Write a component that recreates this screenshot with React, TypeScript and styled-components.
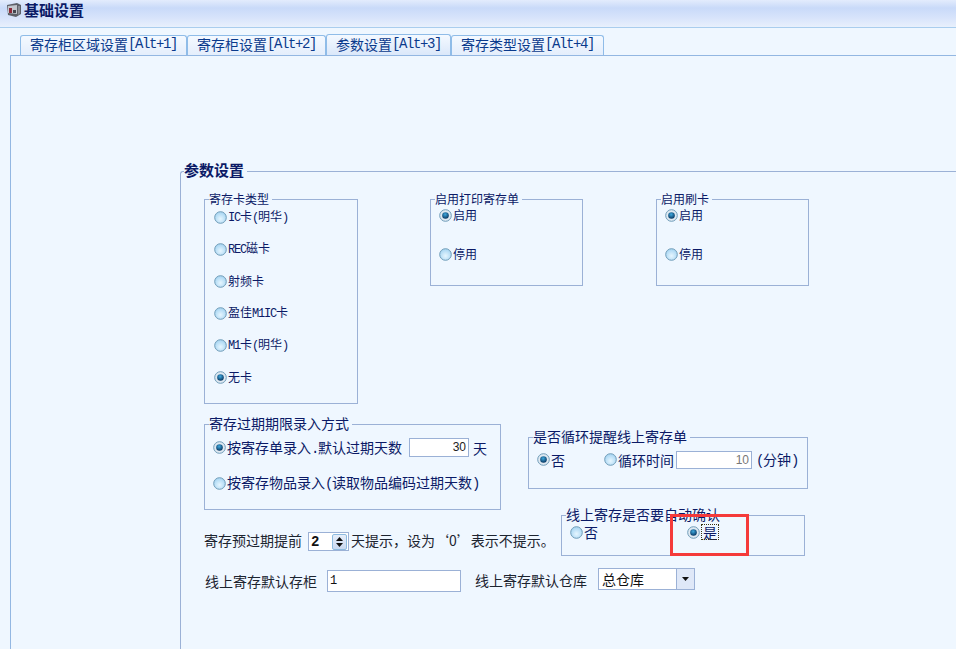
import React from "react";
import styled, { createGlobalStyle } from "styled-components";

const GlobalStyle = createGlobalStyle`
  html, body {
    margin: 0;
    padding: 0;
    height: 649px;
    overflow: hidden;
    background: #eff7ff;
  }
`;

const CJK = `"Noto Sans CJK SC", "Liberation Sans", sans-serif`;

function Radio({ on }: { on?: boolean }) {
  return (
    <RadioDot viewBox="0 0 13 13" width="13" height="13">
      <defs>
        <radialGradient id="off" cx="50%" cy="62%" r="60%">
          <stop offset="0" stopColor="#e6f6ff" />
          <stop offset="1" stopColor="#a5d4f2" />
        </radialGradient>
        <radialGradient id="dot" cx="45%" cy="35%" r="65%">
          <stop offset="0" stopColor="#3fa9de" />
          <stop offset="1" stopColor="#06345f" />
        </radialGradient>
      </defs>
      <circle cx="6.5" cy="6.5" r="5.8" fill={on ? "#dfe9f2" : "url(#off)"} stroke="#6f9cb8" />
      {on && <circle cx="6.5" cy="6.5" r="3.3" fill="url(#dot)" />}
    </RadioDot>
  );
}

function Opt({ label, on, big }: { label: React.ReactNode; on?: boolean; big?: boolean }) {
  return (
    <Option>
      <Radio on={on} />
      <OptText $big={big}>{label}</OptText>
    </Option>
  );
}

export default function App() {
  const cards = [
    <><Half>IC</Half>卡<Half>(</Half>明华<Half>)</Half></>,
    <><Half>REC</Half>磁卡</>,
    <>射频卡</>,
    <>盈佳<Half>M1IC</Half>卡</>,
    <><Half>M1</Half>卡<Half>(</Half>明华<Half>)</Half></>,
    <>无卡</>,
  ];
  return (
    <>
      <GlobalStyle />
      <Page>
        <TitleBar>
          <TitleIcon width="14" height="14" viewBox="0 0 14 14">
            <path d="M0 2l10-2 4 2v9l-5 3-8-2z" fill="#5d6068" />
            <path d="M1 3l9-1v9l-9-1z" fill="#c3c6cd" />
            <path d="M2 5h3v5H2z" fill="#8d2a3a" />
            <path d="M6 7h3v3H6z" fill="#43464f" />
            <path d="M11 3l2 0v7l-2 2z" fill="#8a8d95" />
          </TitleIcon>
          <Title>基础设置</Title>
        </TitleBar>
        <TabRow>
          <Tab>寄存柜区域设置<Half>[Alt+1]</Half></Tab>
          <Tab>寄存柜设置<Half>[Alt+2]</Half></Tab>
          <Tab $active>参数设置<Half>[Alt+3]</Half></Tab>
          <Tab>寄存类型设置<Half>[Alt+4]</Half></Tab>
        </TabRow>
        <Panel>
          <MainGroup>
            <MainLegend>参数设置</MainLegend>
            <TopRow>
              <CardGroup>
                <Legend>寄存卡类型</Legend>
                <CardList>
                  {cards.map((c, i) => (
                    <Opt key={i} label={c} on={i === 5} />
                  ))}
                </CardList>
              </CardGroup>
              <SwitchGroup>
                <Legend>启用打印寄存单</Legend>
                <SwitchList>
                  <Opt label="启用" on />
                  <Opt label="停用" />
                </SwitchList>
              </SwitchGroup>
              <SwitchGroup>
                <Legend>启用刷卡</Legend>
                <SwitchList>
                  <Opt label="启用" on />
                  <Opt label="停用" />
                </SwitchList>
              </SwitchGroup>
            </TopRow>
            <MiddleRow>
              <LeftCol>
                <ExpiryGroup>
                  <BigLegend>寄存过期期限录入方式</BigLegend>
                  <ExpiryLine>
                    <Opt big on label={<>按寄存单录入<Half>.</Half>默认过期天数</>} />
                    <DaysInput>30</DaysInput>
                    <Plain $navy>天</Plain>
                  </ExpiryLine>
                  <Opt big label={<>按寄存物品录入<Half>(</Half>读取物品编码过期天数<Half>)</Half></>} />
                </ExpiryGroup>
                <NoticeLine>
                  <Plain>寄存预过期提前</Plain>
                  <Stepper>
                    <StepValue>2</StepValue>
                    <StepButtons>
                      <svg width="13" height="14" viewBox="0 0 13 14">
                        <path d="M6.5 2l3.5 4H3z M6.5 12L3 8h7z" fill="#111" />
                      </svg>
                    </StepButtons>
                  </Stepper>
                  <Plain>天提示，设为‘0’表示不提示。</Plain>
                </NoticeLine>
              </LeftCol>
              <RightCol>
                <LoopGroup>
                  <BigLegend>是否循环提醒线上寄存单</BigLegend>
                  <LoopLine>
                    <Opt big on label="否" />
                    <Opt big label="循环时间" />
                    <MinutesInput>10</MinutesInput>
                    <Plain $navy><Half>(</Half>分钟<Half>)</Half></Plain>
                  </LoopLine>
                </LoopGroup>
                <ConfirmGroup>
                  <BigLegend>线上寄存是否要自动确认</BigLegend>
                  <ConfirmLine>
                    <Opt big label="否" />
                    <Opt big on label={<Focused>是</Focused>} />
                  </ConfirmLine>
                  <RedMark />
                </ConfirmGroup>
              </RightCol>
            </MiddleRow>
            <BottomRow>
              <Plain>线上寄存默认存柜</Plain>
              <CabinetInput>1</CabinetInput>
              <Plain>线上寄存默认仓库</Plain>
              <Select>
                <SelectValue>总仓库</SelectValue>
                <SelectArrow>
                  <svg width="7" height="4" viewBox="0 0 7 4">
                    <path d="M0 0h7L3.5 4z" fill="#111" />
                  </svg>
                </SelectArrow>
              </Select>
            </BottomRow>
          </MainGroup>
        </Panel>
      </Page>
    </>
  );
}

const Page = styled.div`
  width: 956px;
  height: 649px;
  overflow: hidden;
  background: #eff7ff;
  font-family: ${CJK};
`;
const Half = styled.span`
  font-family: "Liberation Mono", monospace;
  letter-spacing: -0.1em;
`;
const TitleBar = styled.div`
  height: 28px;
  display: flex;
  align-items: flex-start;
  gap: 3px;
  padding-left: 7px;
  box-sizing: border-box;
  border-bottom: 1px solid #a9cdee;
  background: linear-gradient(#e3ecfd 0, #c9daf9 8px, #d8e4fb 18px, #e8f0fc 27px);
`;
const TitleIcon = styled.svg`
  margin-top: 3px;
  flex: none;
`;
const Title = styled.div`
  font-size: 15px;
  font-weight: 700;
  line-height: 20px;
  color: #0b1a66;
`;
const TabRow = styled.div`
  display: flex;
  height: 21px;
  margin-top: 6px;
  padding-left: 20px;
  align-items: flex-end;
`;
const Tab = styled.div<{ $active?: boolean }>`
  height: ${(p) => (p.$active ? "21px" : "20px")};
  box-sizing: border-box;
  display: flex;
  align-items: center;
  padding: 0 9px 3px;
  font-size: 14px;
  color: #0a3a8c;
  white-space: nowrap;
  border: 1px solid #8fbce8;
  border-bottom: none;
  border-radius: 3px 3px 0 0;
  background: linear-gradient(#f4f9ff, ${(p) => (p.$active ? "#dbe8fa" : "#e4eefc")});
`;
const Panel = styled.div`
  margin-left: 10px;
  height: 594px;
  box-sizing: border-box;
  border-top: 1px solid #93b7e2;
  border-left: 1px solid #93b7e2;
  padding: 115px 0 0 169px;
`;
const MainGroup = styled.div`
  position: relative;
  height: 480px;
  border-top: 1px solid #9bb1d6;
  border-left: 1px solid #9bb1d6;
  border-top-left-radius: 3px;
  padding: 27px 0 0 23px;
`;
const MainLegend = styled.div`
  position: absolute;
  top: -12px;
  left: 3px;
  padding: 0 3px 0 0;
  background: #eff7ff;
  font-size: 15px;
  font-weight: 700;
  line-height: 20px;
  color: #0b1a66;
`;
const TopRow = styled.div`
  display: flex;
  align-items: flex-start;
  gap: 72px;
  & > :last-child {
    margin-left: 1px;
  }
`;
const Group = styled.div`
  position: relative;
  box-sizing: border-box;
  border: 1px solid #9bb1d6;
`;
const Legend = styled.div`
  position: absolute;
  top: -9px;
  left: 4px;
  padding: 0 3px 0 0;
  background: #eff7ff;
  font-size: 12px;
  line-height: 16px;
  color: #0b1a66;
  white-space: nowrap;
`;
const BigLegend = styled(Legend)`
  top: -10px;
  font-size: 14px;
  line-height: 16px;
`;
const CardGroup = styled(Group)`
  width: 154px;
  height: 205px;
  padding: 9px 0 0 9px;
`;
const CardList = styled.div`
  display: flex;
  flex-direction: column;
  gap: 16px;
`;
const SwitchGroup = styled(Group)`
  width: 153px;
  height: 87px;
  padding: 7px 0 0 8px;
`;
const SwitchList = styled.div`
  display: flex;
  flex-direction: column;
  gap: 23px;
`;
const Option = styled.div`
  display: flex;
  align-items: center;
  gap: 1px;
  height: 16px;
  white-space: nowrap;
`;
const RadioDot = styled.svg`
  flex: none;
`;
const OptText = styled.span<{ $big?: boolean }>`
  font-size: ${(p) => (p.$big ? "14px" : "12px")};
  line-height: 16px;
  color: #0b1a66;
`;
const MiddleRow = styled.div`
  display: flex;
  margin-top: 20px;
`;
const LeftCol = styled.div`
  width: 324px;
  flex: none;
  display: flex;
  flex-direction: column;
`;
const ExpiryGroup = styled(Group)`
  width: 297px;
  height: 86px;
  padding: 13px 0 0 8px;
  display: flex;
  flex-direction: column;
  gap: 18px;
`;
const ExpiryLine = styled.div`
  display: flex;
  align-items: center;
  height: 19px;
`;
const inputBox = `
  box-sizing: border-box;
  border: 1px solid #9bb1d6;
  background: #fff;
  font-family: "Liberation Sans", sans-serif;
  font-size: 12px;
`;
const DaysInput = styled.div`
  ${inputBox}
  width: 60px;
  height: 19px;
  line-height: 17px;
  margin-left: 7px;
  padding-right: 2px;
  text-align: right;
  color: #222;
`;
const Plain = styled.span<{ $navy?: boolean }>`
  font-size: 14px;
  line-height: 18px;
  color: ${(p) => (p.$navy ? "#0b1a66" : "#1c2430")};
  white-space: nowrap;
  margin-left: 4px;
`;
const NoticeLine = styled.div`
  display: flex;
  align-items: center;
  margin-top: 22px;
  height: 19px;
  & > span:first-child {
    margin: -3px 0 0;
  }
  & > span:last-child {
    margin: -3px 0 0 2px;
  }
`;
const Stepper = styled.div`
  flex: none;
  width: 41px;
  height: 19px;
  margin-left: 6px;
  box-sizing: border-box;
  display: flex;
  align-items: center;
  justify-content: space-between;
  border: 1px solid #9bb1d6;
  background: #fff;
`;
const StepValue = styled.span`
  font-family: "Liberation Mono", monospace;
  font-size: 14px;
  font-weight: 700;
  line-height: 16px;
  padding-left: 2px;
  color: #111;
`;
const StepButtons = styled.span`
  display: flex;
  width: 15px;
  height: 16px;
  margin-right: 1px;
  border: 1px solid #8dbbdf;
  border-radius: 2px;
  background: linear-gradient(#e6eefa, #c9d9f0);
  box-sizing: border-box;
`;
const RightCol = styled.div`
  display: flex;
  flex-direction: column;
  width: 280px;
  flex: none;
  padding-top: 13px;
`;
const LoopGroup = styled(Group)`
  width: 280px;
  height: 52px;
  padding: 12px 0 0 8px;
`;
const LoopLine = styled.div`
  display: flex;
  align-items: center;
  height: 19px;
  & > div:nth-child(2) {
    margin-left: 39px;
  }
`;
const MinutesInput = styled.div`
  ${inputBox}
  width: 76px;
  height: 18px;
  line-height: 16px;
  margin-left: 2px;
  padding-right: 2px;
  text-align: right;
  color: #777;
`;
const ConfirmGroup = styled(Group)`
  width: 244px;
  height: 41px;
  margin: 26px 0 0 33px;
  padding: 8px 0 0 8px;
`;
const ConfirmLine = styled.div`
  display: flex;
  gap: 89px;
`;
const Focused = styled.span`
  outline: 1px dotted #3a3410;
  outline-offset: -1px;
  display: inline-block;
  height: 16px;
  padding: 0 2px;
`;
const RedMark = styled.div`
  position: absolute;
  left: 108px;
  top: -2px;
  width: 79px;
  height: 42px;
  box-sizing: border-box;
  border: 3px solid #f53a3a;
`;
const BottomRow = styled.div`
  display: flex;
  align-items: flex-start;
  margin-top: 14px;
  & > span {
    margin: 2px 0 0 1px;
  }
  & > span:nth-of-type(2) {
    margin: 1px 0 0 14px;
  }
`;
const CabinetInput = styled.div`
  ${inputBox}
  width: 134px;
  height: 22px;
  line-height: 20px;
  margin-left: 10px;
  padding-left: 2px;
  color: #111;
  font-family: "Liberation Mono", monospace;
`;
const Select = styled.div`
  width: 97px;
  height: 22px;
  margin-left: 11px;
  margin-top: -2px;
  box-sizing: border-box;
  display: flex;
  border: 1px solid #9bb1d6;
  background: #fff;
`;
const SelectValue = styled.span`
  flex: 1;
  font-size: 14px;
  line-height: 20px;
  padding-left: 3px;
  color: #111;
`;
const SelectArrow = styled.span`
  width: 17px;
  display: flex;
  align-items: center;
  justify-content: center;
  border-left: 1px solid #9bb1d6;
  background: #dfe8f8;
`;
